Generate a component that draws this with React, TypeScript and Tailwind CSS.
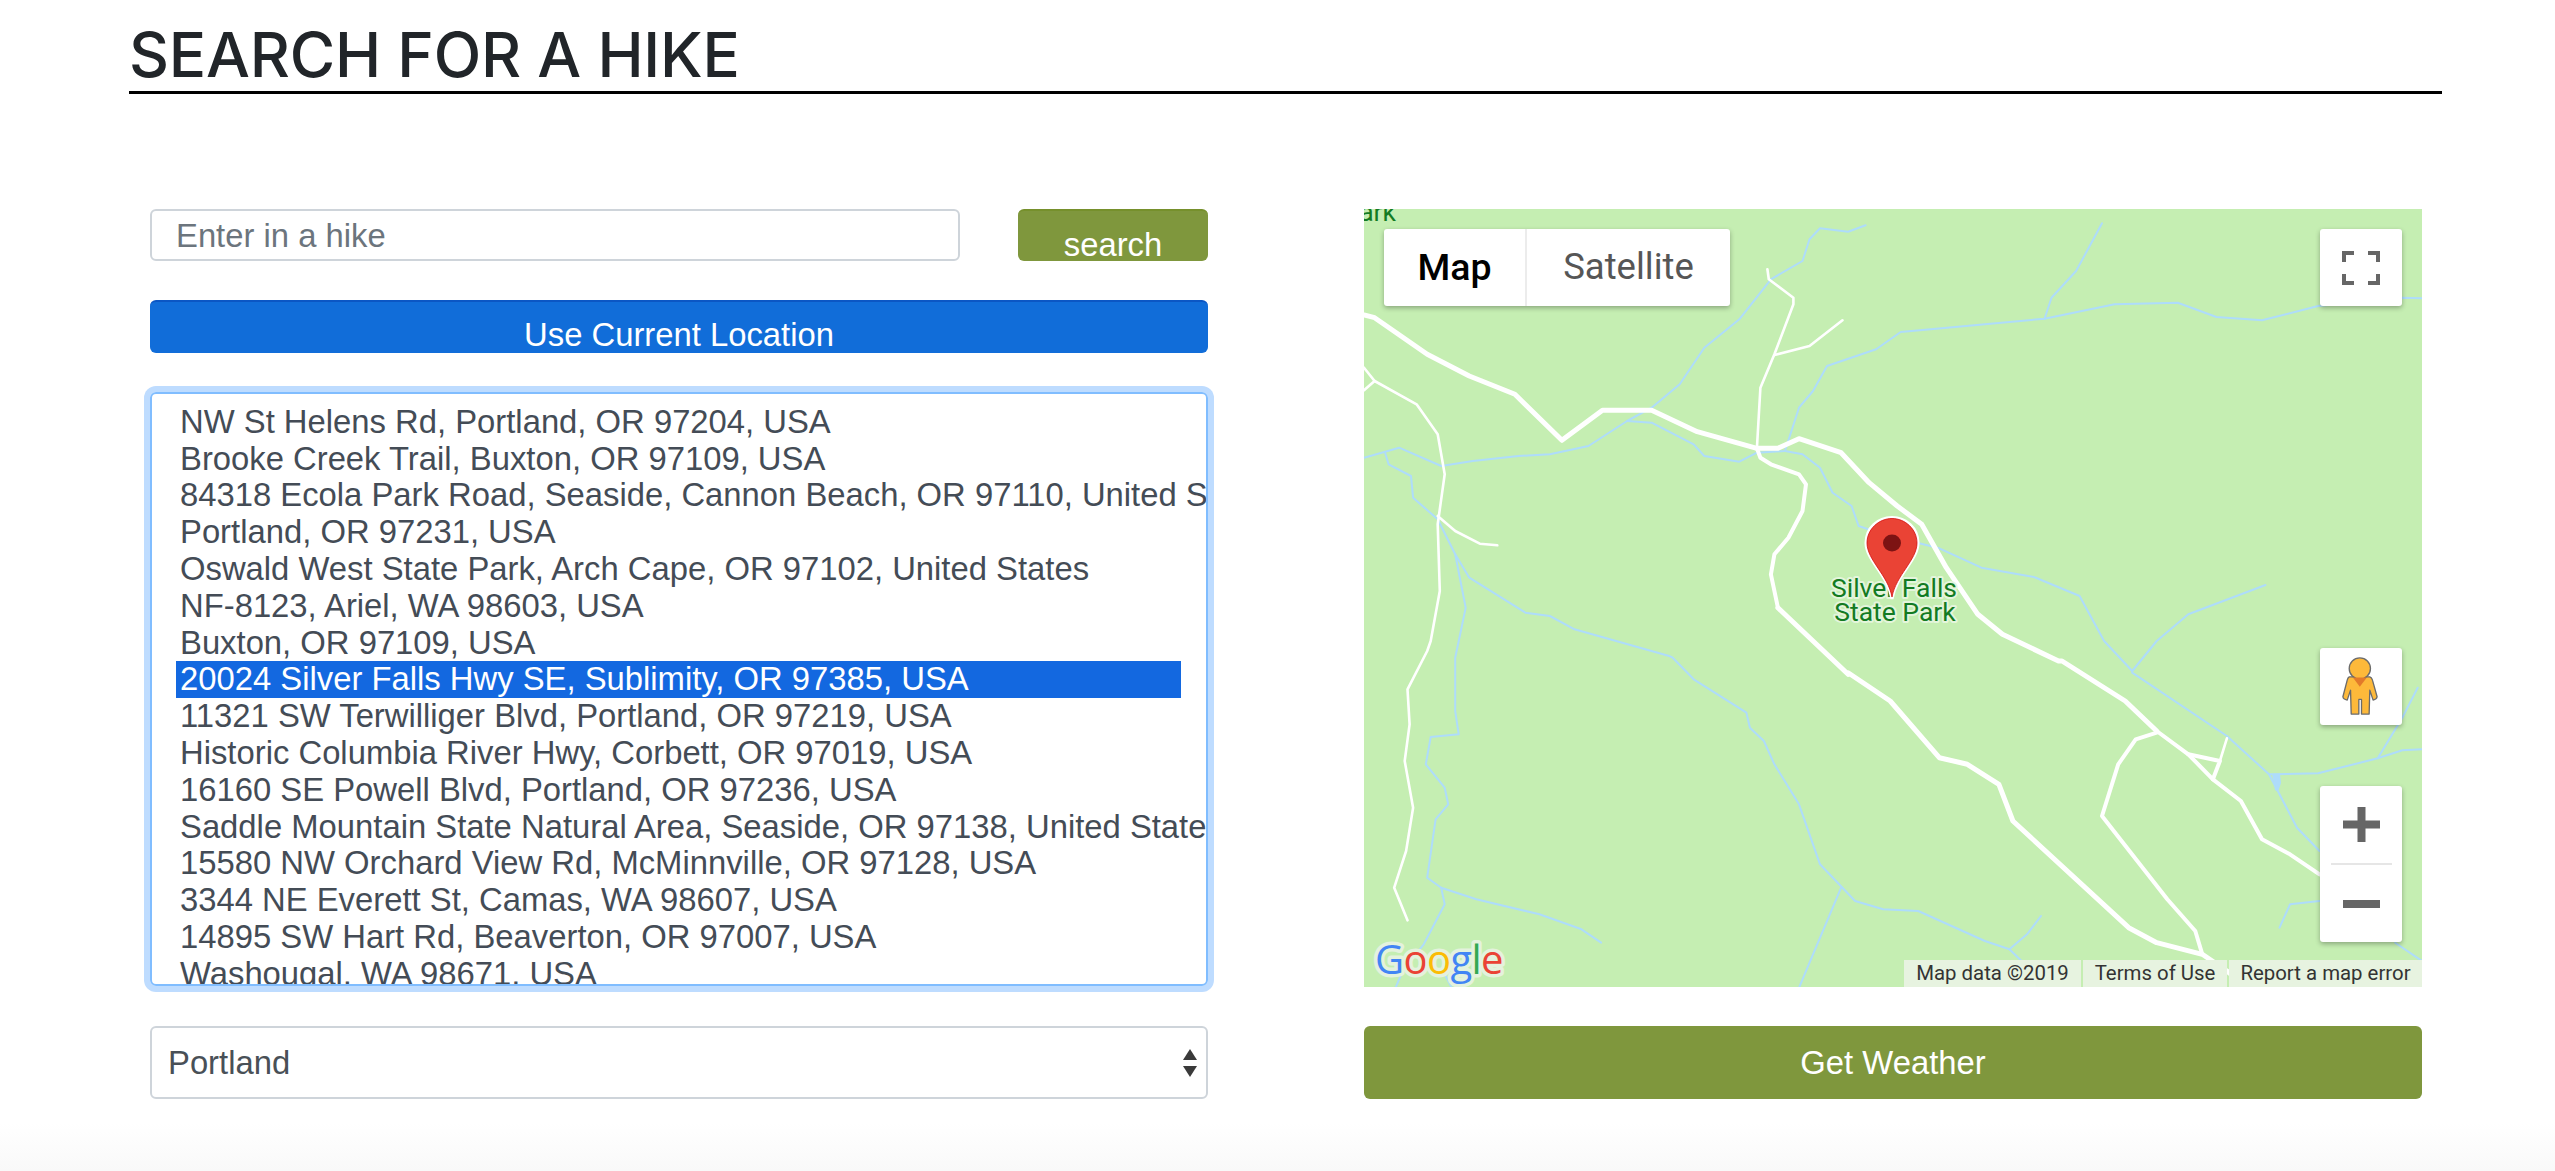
type P = [number, number];
const OX = 1364;
const OY = 208;
const SX = 1.4255;
// points read from crops: a = upper crop (page y = 190 + y/3), b = lower crop (page y = 650 + y/3)
const mapX = (x: number) => 1350 + x / SX - OX;
const a = (pts: P[]) => pts.map(([x, y]) => `${mapX(x).toFixed(1)},${(190 + y / 3 - OY).toFixed(1)}`);
const b = (pts: P[]) => pts.map(([x, y]) => `${mapX(x).toFixed(1)},${(650 + y / 3 - OY).toFixed(1)}`);
const line = (coords: string[]) => "M" + coords.join("L");

const rivers: string[] = [
  line(a([[735,103],[710,122],[670,112],[655,145],[645,210],[600,265],[555,385],[505,470],[470,580],[430,650],[395,690],[340,765],[285,790],[240,795],[175,810],[130,825],[70,770],[20,800]])),
  line(a([[1528,322],[1500,320],[1380,345],[1300,388],[1235,378],[1180,335],[1090,340],[990,383],[785,423],[750,475],[680,525],[660,600],[640,650],[620,780],[580,785],[555,812],[505,795],[490,760],[430,695],[395,690]])),
  line(a([[1072,97],[1035,240],[1000,320],[990,383]])),
  line([...a([[620,780],[645,790],[670,830],[688,905],[715,945],[725,1005],[760,1030],[840,1072],[900,1130],[975,1158],[1040,1215],[1075,1350],[1115,1440]]), ...b([[1115,65],[1250,255],[1310,370],[1325,430],[1350,530],[1382,600]])]),
  line(a([[1305,1182],[1195,1270],[1150,1350],[1115,1440]])),
  line([...a([[50,785],[55,820],[87,855],[90,920],[125,985],[150,1090],[165,1250],[150,1400]]), ...b([[150,180],[155,250],[115,258],[108,340],[135,410],[140,460],[122,505],[110,680],[130,710],[180,745],[270,790],[330,835],[358,875]])]),
  line(b([[130,710],[135,760],[115,840],[105,880],[75,960],[65,1010]])),
  line([...a([[150,1090],[170,1160],[250,1265],[285,1275],[320,1315],[455,1395]]), ...b([[460,20],[490,85],[565,185],[570,230],[590,270],[605,340],[640,460],[670,640],[720,750],[760,775],[810,780],[905,870],[940,895],[965,850],[985,795]])]),
  line(b([[700,710],[640,1010]])),
  line(b([[940,895],[960,935]])),
  line(b([[1310,370],[1380,367],[1465,322],[1500,298],[1528,295]])),
  line(b([[1465,322],[1500,200],[1522,110]])),
  line(b([[1325,830],[1340,760],[1382,750]])),
  line(b([[1490,875],[1528,930]])),
  line(b([[130,950],[145,1010]])),
];

const roadsThick: string[] = [
  line([...a([[20,372],[35,380],[110,490],[170,555],[235,610],[302,748],[360,658],[430,658],[495,722],[580,772],[610,772],[640,743],[700,785],[740,875],[780,945],[815,1000],[850,1130],[895,1270],[930,1330],[1010,1410]]), ...b([[1015,30],[1105,150],[1150,240]])]),
  line([...a([[610,1250],[660,1350],[710,1450]]), ...b([[710,65],[770,150],[840,320],[880,340],[925,400],[945,510],[1110,830],[1150,875],[1215,910],[1250,960],[1280,1010]])]),
];
const roadsMedium: string[] = [
  line(a([[580,772],[585,800],[600,820],[640,850],[650,880],[645,960],[625,1040],[605,1090],[600,1150],[610,1250]])),
  line(b([[1150,245],[1120,265],[1095,340],[1072,495],[1165,745],[1205,840],[1215,910]])),
  line(b([[1150,240],[1195,310],[1230,385],[1270,450],[1300,565],[1340,610],[1382,670]])),
  line(b([[1195,310],[1240,330],[1230,385]])),
];
const roadsThin: string[] = [
  line(a([[595,235],[597,265],[632,320],[632,340],[605,490],[585,590],[580,772]])),
  line(a([[605,492],[655,465],[702,388]])),
  line([...a([[20,530],[35,570],[95,640],[125,730],[135,850],[125,1000],[128,1200],[115,1350]]), ...b([[110,0],[82,115],[85,220],[78,330],[90,470],[80,600],[63,710],[82,808]])]),
  line(a([[125,975],[150,1020],[185,1058],[210,1063]])),
  line(a([[20,598],[35,570]])),
  line(b([[1240,330],[1250,262]])),
];

function MapDrawing() {
  return (
    <svg className="absolute inset-0" width="1058" height="778" viewBox="0 0 1058 778" fill="none">
      <g stroke="#aedcfb" strokeWidth="2" strokeLinejoin="round" strokeLinecap="round">
        {rivers.map((d, i) => <path key={i} d={d} />)}
      </g>
      <path d="M 908 565 l 8 0 l 1 9 l -3 9 l -3 -2 z" fill="#aedcfb" />
      <g stroke="#ffffff" strokeLinejoin="round" strokeLinecap="round">
        {roadsThin.map((d, i) => <path key={i} d={d} strokeWidth="2.6" />)}
        {roadsMedium.map((d, i) => <path key={i} d={d} strokeWidth="4" />)}
        {roadsThick.map((d, i) => <path key={i} d={d} strokeWidth="5" />)}
      </g>
      <g fontFamily="Roboto, sans-serif" fontSize="26.5" fill="#137b22" stroke="#e4f5dc" strokeWidth="4" paintOrder="stroke" strokeLinejoin="round" textAnchor="middle">
        <text x="530" y="388">Silver Falls</text>
        <text x="531" y="412">State Park</text>
        <text x="32" y="12" textAnchor="end" stroke="none" fill="#137b22">ark</text>
      </g>
      <path d="M528 390 C524 366 502 351 502 334 C502 319 514 308.500 528 308.500 C542 308.500 554 319 554 334 C554 351 532 366 528 390 Z" fill="#ea4335" stroke="#ffffff" strokeWidth="3" />
      <path d="M528 388 C524 366 503 351 503 334 C503 320 515 309.500 528 309.500 C541 309.500 553 320 553 334 C553 351 532 366 528 388 Z" fill="#ea4335" stroke="#d50f0f" strokeWidth="0.8" />
      <ellipse cx="528" cy="334" rx="9" ry="8.500" fill="#7d1313" />
      <g fontFamily="'Open Sans', sans-serif" fontSize="40" fontWeight="500" stroke="#e4f2dd" strokeWidth="7" paintOrder="stroke" strokeLinejoin="round" letterSpacing="-0.6">
        <text x="11" y="765"><tspan fill="#4285f4">G</tspan><tspan fill="#ea4335">o</tspan><tspan fill="#fbbc05">o</tspan><tspan fill="#4285f4">g</tspan><tspan fill="#34a853">l</tspan><tspan fill="#ea4335">e</tspan></text>
      </g>
    </svg>
  );
}

function Pegman() {
  return (
    <svg width="82" height="77" viewBox="118 82 247 230">
      <g fill="#fdb93a" stroke="#6b6b6b" strokeWidth="4" strokeLinejoin="round">
        <path d="M206 168 L268 168 Q274 170 276 178 L290 228 Q289 236 278 238 L268 208 L266 280 L243 280 L243 236 L235 236 L235 280 L212 280 L210 208 L200 238 Q188 236 187 228 L200 178 Q202 170 206 168 Z" />
        <circle cx="238" cy="143" r="32" />
      </g>
      <path d="M217 170 L259 170 L238 198 Z" fill="#e27a2a" />
    </svg>
  );
}

const ctrlShadow = "shadow-[0_2px_5px_rgba(0,0,0,0.3)]";

function MapView() {
  return (
    <div className="relative h-[778px] w-full overflow-hidden bg-[#c5eeb2] font-['Roboto',sans-serif]">
      <MapDrawing />

      <div className={`absolute left-[20px] top-[20px] flex h-[77px] w-[346px] rounded-[3px] bg-white ${ctrlShadow}`}>
        <div className="flex w-[143px] items-center justify-center border-r-2 border-[#ececec] text-[37.500px] font-medium text-black">Map</div>
        <div className="flex flex-1 items-center justify-center text-[36.500px] text-[#565656]">Satellite</div>
      </div>

      <div className={`absolute right-[20px] top-[20px] flex h-[77px] w-[82px] items-center justify-center rounded-[3px] bg-white ${ctrlShadow}`}>
        <svg width="38" height="34" viewBox="0 0 38 34" fill="none" stroke="#666666" strokeWidth="4">
          <path d="M2 11V2H12M26 2H36V11M36 23V32H26M12 32H2V23" />
        </svg>
      </div>

      <div className={`absolute right-[20px] top-[439px] flex h-[77px] w-[82px] items-center justify-center rounded-[3px] bg-white ${ctrlShadow}`}>
        <Pegman />
      </div>

      <div className={`absolute right-[20px] top-[577px] flex h-[156px] w-[82px] flex-col items-center rounded-[3px] bg-white ${ctrlShadow}`}>
        <div className="flex h-[77px] w-full items-center justify-center">
          <svg width="37" height="35" viewBox="0 0 37 35" fill="#666666">
            <rect x="14.500" y="0" width="8" height="35" />
            <rect x="0" y="13.500" width="37" height="8" />
          </svg>
        </div>
        <div className="h-[2px] w-[61px] bg-[#e6e6e6]" />
        <div className="flex h-[77px] w-full items-center justify-center">
          <div className="h-[8px] w-[37px] bg-[#666666]" />
        </div>
      </div>

      <div className="absolute bottom-0 right-0 flex h-[27px] w-[518px] items-stretch gap-[2px] text-[20.400px] leading-[27px] text-[#333333]">
        <div className="flex w-[177px] justify-center bg-[#e7f3e0]">Map data ©2019</div>
        <div className="flex w-[144px] justify-center bg-[#e7f3e0]">Terms of Use</div>
        <div className="flex flex-1 justify-center bg-[#e7f3e0]">Report a map error</div>
      </div>
    </div>
  );
}

const places = [
  "NW St Helens Rd, Portland, OR 97204, USA",
  "Brooke Creek Trail, Buxton, OR 97109, USA",
  "84318 Ecola Park Road, Seaside, Cannon Beach, OR 97110, United States",
  "Portland, OR 97231, USA",
  "Oswald West State Park, Arch Cape, OR 97102, United States",
  "NF-8123, Ariel, WA 98603, USA",
  "Buxton, OR 97109, USA",
  "20024 Silver Falls Hwy SE, Sublimity, OR 97385, USA",
  "11321 SW Terwilliger Blvd, Portland, OR 97219, USA",
  "Historic Columbia River Hwy, Corbett, OR 97019, USA",
  "16160 SE Powell Blvd, Portland, OR 97236, USA",
  "Saddle Mountain State Natural Area, Seaside, OR 97138, United States",
  "15580 NW Orchard View Rd, McMinnville, OR 97128, USA",
  "3344 NE Everett St, Camas, WA 98607, USA",
  "14895 SW Hart Rd, Beaverton, OR 97007, USA",
  "Washougal, WA 98671, USA",
];

export default function App() {
  return (
    <div className="flex h-[1171px] w-full flex-col overflow-hidden bg-white font-['Liberation_Sans',Arial,sans-serif] text-[32.800px]">
      <div className="pl-[129px] pr-[113px]">
        <h1 className="h-[94px] border-b-[3px] border-black pt-[19px] font-['Inter',sans-serif] text-[62px] font-medium leading-[72px] tracking-[-0.2px] text-[#212529]">
          SEARCH FOR A HIKE
        </h1>
        <div className="mt-[115px] flex justify-between pl-[21px] pr-[20px]">
          <div className="flex w-[1058px] flex-col">
            <div className="flex h-[52px] gap-[58px]">
              <div className="flex w-[810px] items-center rounded-[6px] border-2 border-[#ced4da] pl-[24px] pt-[1px] text-[#6c757d]">
                Enter in a hike
              </div>
              <div className="flex h-[52px] flex-1 items-start justify-center overflow-hidden rounded-[6px] border-t-2 border-[#76902c] bg-[#7f973d] pt-[15px] leading-[38px] text-white">
                search
              </div>
            </div>
            <div className="mt-[39px] flex h-[53px] justify-center overflow-hidden rounded-[6px] border-t-2 border-[#0b56c4] bg-[#116dd9] pt-[14px] leading-[38px] text-white">
              Use Current Location
            </div>
            <div className="mt-[39px] h-[594px] overflow-hidden rounded-[6px] border-2 border-[#80bdff] pb-[8px] pl-[24px] pr-[25px] pt-[9.500px] text-[#444c56] shadow-[0_0_0_6px_#bedcff]">
              {places.map((place, i) => (
                <div
                  key={place}
                  className={i === 7
                    ? "flex h-[36.800px] items-center whitespace-nowrap bg-[#1368e0] pl-[4px] leading-[36px] text-white"
                    : "flex h-[36.800px] items-center whitespace-nowrap pl-[4px] leading-[36px]"}
                >
                  {place}
                </div>
              ))}
            </div>
            <div className="mt-[40px] flex h-[73px] items-center justify-between rounded-[6px] border-2 border-[#ced4da] pl-[16px] pr-[8px] text-[#495057]">
              <span>Portland</span>
              <svg width="16" height="28" viewBox="0 0 16 28" fill="#3a3a3a">
                <path d="M8 0L15 11H1Z" />
                <path d="M8 28L15 17H1Z" />
              </svg>
            </div>
          </div>

          <div className="flex w-[1058px] flex-col">
            <MapView />
            <div className="mt-[39px] flex h-[73px] items-center justify-center rounded-[6px] bg-[#7f973d] text-white">
              Get Weather
            </div>
          </div>
        </div>
      </div>
      <div className="mt-auto h-[48px] bg-gradient-to-b from-white to-[#f9f9f9]" />
    </div>
  );
}
